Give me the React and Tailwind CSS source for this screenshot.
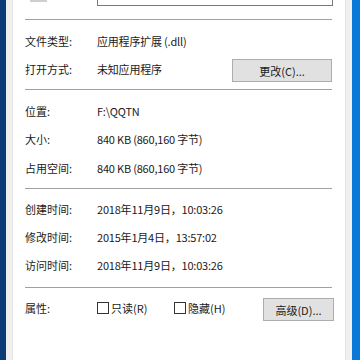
import React from "react";

const font = { fontFamily: '"Noto Sans CJK SC", "Noto Sans", sans-serif' };

function Row({ label, value, className = "", children }) {
  return (
    <div className={"flex items-start pl-[12px] " + className}>
      <div className="w-[72px] h-[22px] leading-[22px] shrink-0">{label}</div>
      <div className="h-[22px] leading-[22px] flex-1 tracking-[-0.2px]">{value}</div>
      {children}
    </div>
  );
}

function Divider({ className = "" }) {
  return <div className={"ml-[12px] w-[307px] h-px bg-[#a0a0a0] " + className} />;
}

function Check({ label }) {
  return (
    <div className="flex items-center h-[22px]">
      <div className="w-[12px] h-[12px] border border-[#333333] bg-white mr-[2px]" />
      <span>{label}</span>
    </div>
  );
}

export default function App() {
  return (
    <div className="flex w-[360px] h-[360px] overflow-hidden text-[11px] text-[#1a1a1a]" style={font}>
      <div className="w-[6px] bg-[#0b3c78]" />
      <div className="w-[7px] bg-[#f0f0f0] border-r border-[#e4e4e4]" />
      <div className="w-[332px] bg-white flex flex-col">
        <div className="flex items-start h-[6px]">
          <div className="ml-[17px] w-[17px] h-[2px] bg-[#cfcfcf]" />
          <div className="ml-[50px] w-[236px] h-[6px] border border-t-0 border-[#7a7a7a]" />
        </div>
        <Divider className="mt-[13px]" />
        <Row label="文件类型:" value="应用程序扩展 (.dll)" className="mt-[10px]" />
        <Row label="打开方式:" value="未知应用程序" className="mt-[6px]">
          <button className="mt-[1px] mr-[13px] w-[100px] h-[23px] bg-[#e1e1e1] border border-[#adadad] text-[11px] leading-[20px] text-[#1a1a1a]" style={font}>
            更改(C)...
          </button>
        </Row>
        <Divider className="mt-[7px]" />
        <Row label="位置:" value="F:\QQTN" className="mt-[10px]" />
        <Row label="大小:" value="840 KB (860,160 字节)" className="mt-[6px]" />
        <Row label="占用空间:" value="840 KB (860,160 字节)" className="mt-[7px]" />
        <Divider className="mt-[9px]" />
        <Row label="创建时间:" value="2018年11月9日，10:03:26" className="mt-[9px]" />
        <Row label="修改时间:" value="2015年1月4日，13:57:02" className="mt-[6px]" />
        <Row label="访问时间:" value="2018年11月9日，10:03:26" className="mt-[6px]" />
        <Divider className="mt-[11px]" />
        <div className="flex items-start pl-[12px] mt-[9px]">
          <div className="w-[72px] h-[22px] leading-[22px] shrink-0">属性:</div>
          <div className="w-[77px]">
            <Check label="只读(R)" />
          </div>
          <div className="flex-1">
            <Check label="隐藏(H)" />
          </div>
          <button className="mt-[1px] mr-[11px] w-[71px] h-[23px] bg-[#e1e1e1] border border-[#adadad] text-[11px] leading-[20px] text-[#1a1a1a]" style={font}>
            高级(D)...
          </button>
        </div>
      </div>
      <div className="w-[7px] bg-[#f0f0f0] border-l border-[#e4e4e4]" />
      <div className="w-[8px] bg-[#0a78d7]" />
    </div>
  );
}
